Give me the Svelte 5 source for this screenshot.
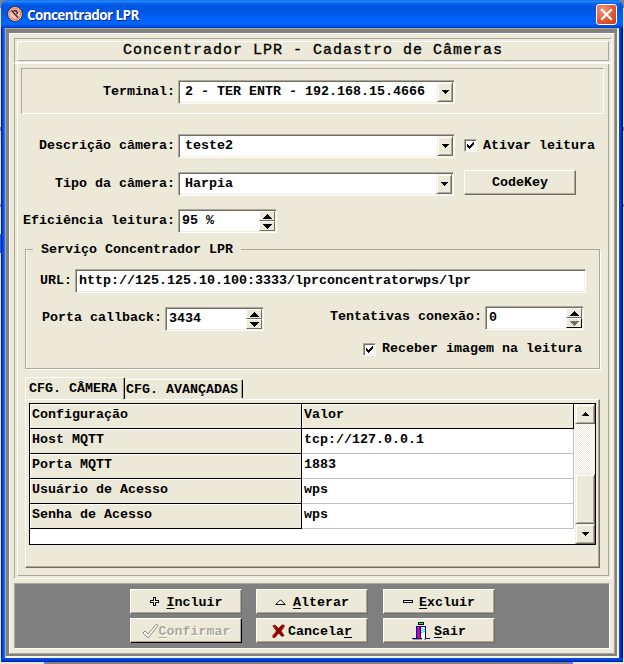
<script>
  const rows = [
    ['Host MQTT', 'tcp://127.0.0.1'],
    ['Porta MQTT', '1883'],
    ['Usuário de Acesso', 'wps'],
    ['Senha de Acesso', 'wps']
  ];
  let ativar = $state(true);
  let receber = $state(true);
</script>

{#snippet combo(value, cls)}
  <div class="field combo {cls}">
    <span>{value}</span>
    <button class="drop" aria-label="Abrir">
      <svg width="7" height="4" shape-rendering="crispEdges"><path d="M0 0h7v1h-1v1h-1v1h-1v1h-1v-1h-1v-1h-1v-1h-1z" /></svg>
    </button>
  </div>
{/snippet}

{#snippet spin(value, off)}
  <div class="field spin">
    <span>{value}</span>
    <div class="steps">
      <button aria-label="Mais"><svg width="9" height="5" shape-rendering="crispEdges"><path d="M4 0h1v1h1v1h1v1h1v1h1v1h-9v-1h1v-1h1v-1h1v-1h1z" /></svg></button>
      <button aria-label="Menos" class:off><svg width="9" height="5" shape-rendering="crispEdges"><path d="M0 0h9v1h-1v1h-1v1h-1v1h-1v1h-1v-1h-1v-1h-1v-1h-1v-1h-1z" /></svg></button>
    </div>
  </div>
{/snippet}

{#snippet check(on)}
  <span class="check">
    {#if on}<svg width="7" height="7" shape-rendering="crispEdges"><path d="M0 2h1v1h1v1h1v-1h1v-1h1v-1h1v-1h1v3h-1v1h-1v1h-1v1h-1v1h-1v-1h-1v-1h-1z" /></svg>{/if}
  </span>
{/snippet}

<div class="desktop">
  <div class="window">
    <header class="caption">
      <svg class="logo" width="16" height="16" viewBox="0 0 16 16">
        <circle cx="8" cy="8" r="7.4" fill="#fff" stroke="#34221f" />
        <circle cx="8" cy="8" r="5.8" fill="#f8c4ba" stroke="#e88070" stroke-width="1.4" />
        <path d="M4.500 4.500l6.500 7M6.500 4.800h2.600l1.400 1.700-1 1.600" fill="none" stroke="#4b2025" stroke-width="1.400" />
      </svg>
      <span class="name">Concentrador LPR</span>
      <button class="close" aria-label="Fechar">
        <svg width="21" height="21" viewBox="0 0 21 21"><path d="M6 6l9 9M15 6l-9 9" stroke="#fff" stroke-width="2.2" stroke-linecap="square" /></svg>
      </button>
    </header>

    <div class="client">
      <div class="sheet">
        <div class="head"><h1>Concentrador LPR - Cadastro de Câmeras</h1></div>

        <div class="frame">
          <main>
            <section class="terminal">
              <span class="lab">Terminal:</span>{@render combo('2 - TER ENTR - 192.168.15.4666', '')}
            </section>

            <div class="row r1">
              <span class="lab">Descrição câmera:</span>{@render combo('teste2', '')}
              <label>{@render check(ativar)}Ativar leitura<input type="checkbox" bind:checked={ativar} hidden /></label>
            </div>
            <div class="row r2">
              <span class="lab">Tipo da câmera:</span>{@render combo('Harpia', 'short')}
              <button class="btn key">CodeKey</button>
            </div>
            <div class="row r3">
              <span class="lab">Eficiência leitura:</span>{@render spin('95 %', false)}
            </div>

            <fieldset>
              <legend>Serviço Concentrador LPR</legend>
              <div class="url"><span>URL:</span><div class="field">http://125.125.10.100:3333/lprconcentratorwps/lpr</div></div>
              <div class="ports">
                <div class="port"><span>Porta callback:</span>{@render spin('3434', false)}</div>
                <div class="port tries"><span>Tentativas conexão:</span>{@render spin('0', true)}</div>
              </div>
              <label class="recv">{@render check(receber)}Receber imagem na leitura<input type="checkbox" bind:checked={receber} hidden /></label>
            </fieldset>

            <nav>
              <button class="tab on">CFG. CÂMERA</button>
              <button class="tab">CFG. AVANÇADAS</button>
            </nav>
            <div class="pane">
              <div class="grid">
                <div class="cells">
                  <div class="line top"><div class="k">Configuração</div><div class="h">Valor</div></div>
                  {#each rows as [k, v]}
                    <div class="line"><div class="k">{k}</div><div class="v">{v}</div></div>
                  {/each}
                </div>
                <div class="bar">
                  <button class="sb" aria-label="Subir"><svg width="7" height="4" shape-rendering="crispEdges"><path d="M3 0h1v1h1v1h1v1h1v1h-7v-1h1v-1h1v-1h1z" /></svg></button>
                  <div class="gap"></div>
                  <div class="sb thumb"></div>
                  <button class="sb" aria-label="Descer"><svg width="7" height="4" shape-rendering="crispEdges"><path d="M0 0h7v1h-1v1h-1v1h-1v1h-1v-1h-1v-1h-1v-1h-1z" /></svg></button>
                </div>
              </div>
            </div>
          </main>
        </div>

        <footer>
          <button class="btn">
            <svg width="9" height="9" style:margin-right="8px" shape-rendering="crispEdges"><path d="M3.5 .5h2v3h3v2h-3v3h-2v-3h-3v-2h3z" fill="#fff" stroke="#000" /></svg><span><u>I</u>ncluir</span>
          </button>
          <button class="btn">
            <svg width="11" height="6" style:margin-right="7px"><path d="M.8 5.5L5.5 .8l4.7 4.7z" fill="#fff" stroke="#000" /></svg><span><u>A</u>lterar</span>
          </button>
          <button class="btn">
            <svg width="10" height="3" style:margin-right="6px" shape-rendering="crispEdges"><path d="M.5 .5h9v2h-9z" fill="#fff" stroke="#000" /></svg><span><u>E</u>xcluir</span>
          </button>
          <button class="btn gray">
            <svg width="17" height="16"><path d="M1 10l2-2 3 3 8.500-10 1.500 1.500L6 15z" fill="#fff" stroke="#8f8c80" /></svg><span><u>C</u>onfirmar</span>
          </button>
          <button class="btn">
            <svg width="13" height="14" style:margin-right="3px"><path d="M1 2l2-1 3.500 3.500L10 1h2v2L9 7l3 4.500-2 1L6.500 9 3 13.500H1v-2L4.500 7z" fill="#8b0000" stroke="#8b0000" stroke-width=".8" /><path d="M1 1.500l3.500 5M4 8L1 11.500v2M12 1v2L9 6.500" fill="none" stroke="#f01818" /></svg><span>Cancela<u>r</u></span>
          </button>
          <button class="btn">
            <svg width="18" height="18" style:margin-right="4px" shape-rendering="crispEdges">
              <path d="M6 0h6v3H6z" /><path d="M7 1h4v1H7z" fill="#0f0" />
              <path d="M4 4h10v12h4v1h-5V5H5v12H0v-1h4z" fill="#000080" />
              <path d="M5 5h4v11H5z" fill="#c000c0" /><path d="M9 5h4v11H9z" fill="#fff" />
              <path d="M9 6h2v1H9zM11 7h2v1h-2zM9 8h2v1H9zM11 9h2v1h-2zM9 10h2v1H9z" fill="#0ee" />
              <path d="M5 16h5v1H5zM8 15h1v2H8zM8 5h1v10H8z" fill="#300050" /><path d="M1 17h9v1H1zM12 17h2v1h-2z" fill="#999" />
            </svg><span><u>S</u>air</span>
          </button>
        </footer>
      </div>
    </div>
  </div>
  <div class="under"></div>
</div>

<style>
  .desktop, .desktop * { box-sizing: border-box; }
  .desktop {
    width: 624px; height: 664px; overflow: hidden; padding: 0 1px;
    background:
      linear-gradient(#7d8296, #7d8296) 0 0 / 624px 8px no-repeat,
      linear-gradient(#2a62c8, #2a62c8) 0 234px / 1px 19px no-repeat,
      linear-gradient(#8c8a96, #8c8a96) 0 127px / 624px 4px no-repeat,
      linear-gradient(#8c8a96, #8c8a96) 0 204px / 624px 3px no-repeat,
      #e6e3da;
    font: bold 13.33px/16px "Liberation Mono", "Courier New", monospace; color: #000;
  }
  button { font: inherit; color: inherit; padding: 0; margin: 0; border: 0; border-radius: 0; background: #ece9d8; }
  svg { display: block; flex: none; }
  .window {
    width: 622px; height: 662px; border-radius: 7px 7px 0 0; padding: 0 4px 4px;
    background:
      linear-gradient(#0a50e4, #003cdc 50%, #001ea0) 0 658px / 622px 4px no-repeat,
      linear-gradient(90deg, #0019cf 1px, #0440d8 1px 2px, #0a5aec 2px 3px, #1c6cf4 3px 4px, transparent 4px) 0 28px / 4px 630px no-repeat,
      linear-gradient(90deg, #0048ee 1px, #003ce0 1px 2px, #0022b4 2px 3px, #001490 3px) 618px 28px / 4px 630px no-repeat,
      #0054e3;
  }
  .caption {
    height: 28px; margin: 0 -4px; padding: 0 6px 1px; border-radius: 7px 7px 0 0;
    display: flex; align-items: center;
    background: linear-gradient(#0d5ad8 0, #2a8fff 1px, #0868ee 3px, #0054e0 6px, #0056e6 12px, #0062fa 19px, #0066ff 24px, #0050e0 26px, #003cc4 28px);
  }
  .name {
    margin-left: 4px; flex: 1; color: #fff; text-shadow: 1px 1px #0a2a8c; white-space: nowrap;
    font: bold 13.5px/16px "Open Sans", "Noto Sans", sans-serif; letter-spacing: -.6px; padding-top: 3px;
  }
  .close {
    width: 21px; height: 21px; margin-top: 2px; border: 1px solid #fff; border-radius: 3px;
    background: radial-gradient(circle at 30% 25%, #f0947a, #e25a34 55%, #c23a14);
  }
  .close svg { margin: -1px; }
  .client {
    height: 630px; padding: 4px 2px 2px 3px; background: #808080;
    border: solid; border-width: 1px 2px 2px 1px; border-color: #aca899 #f6f5ee #f6f5ee #aca899;
  }
  .sheet {
    height: 621px; background: #ece9d8; padding: 4px 2px 0 4px;
    border: 1px solid; border-color: #fff #aca899 #aca899 #fff;
  }
  .head {
    width: 598px; height: 26px; padding: 2px;
    border: solid; border-width: 1px 1px 2px 1px; border-color: #aca899 #fff #fff #aca899;
  }
  h1 {
    margin: 0; height: 20px; border: 1px solid; border-color: #fff #aca899 #aca899 #fff;
    text-align: center; font: normal 15px/18px "Liberation Mono", "Courier New", monospace; letter-spacing: 1px;
    -webkit-text-stroke: .35px #000;
  }
  .frame {
    width: 598px; height: 515px; padding: 0 2px 2px;
    border: solid; border-width: 0 1px 1px; border-color: #fff #fff #fff #aca899;
  }
  main {
    height: 512px; border: solid; border-width: 0 1px 1px; border-color: #aca899 #aca899 #aca899 #fff;
    padding: 4px 4px 0 3px;
  }
  .terminal {
    height: 46px; border: 1px solid; border-color: #aca899 #fff #fff #aca899;
    display: flex; padding: 11px 0 0; width: 583px;
  }
  .lab { width: 157px; text-align: right; margin-right: 3px; line-height: 23px; white-space: nowrap; }
  .terminal .lab { width: 153px; }
  .field {
    height: 24px; background: #fff; border: 1px solid; border-color: #aca899 #fff #fff #aca899;
    box-shadow: inset 1px 1px #716f64, inset -1px -1px #f1efe2;
    padding: 0 1px 0 3px; line-height: 22px; white-space: pre; flex: none;
  }
  .combo, .spin { display: flex; justify-content: space-between; }
  .combo { width: 277px; padding: 1px 1px 0 6px; line-height: 20px; }
  .short { width: 276px; }
  .drop, .sb {
    width: 16px; height: 20px; display: flex; align-items: center; justify-content: center;
    border: 1px solid; border-color: #f1efe2 #716f64 #716f64 #f1efe2;
    box-shadow: inset 1px 1px #fff, inset -1px -1px #aca899;
  }
  .spin { width: 99px; padding: 1px 1px 0 3px; line-height: 20px; }
  .steps { width: 16px; height: 20px; display: flex; flex-direction: column; }
  .steps button {
    width: 16px; height: 10px; flex: none; display: flex; align-items: center; justify-content: center; padding-left: 1px;
    border: 1px solid; border-color: #fff #716f64 #716f64 #fff;
  }
  .steps .off { fill: #716f64; border-color: #fff #000 #000 #fff; }
  .row { display: flex; height: 24px; margin-left: -3px; }
  .r1 { margin-top: 20px; }
  .r2 { margin-top: 14px; }
  .r3 { margin-top: 13px; }
  label { display: flex; align-items: center; white-space: nowrap; }
  .row label { margin-left: 9px; height: 23px; }
  .check {
    width: 13px; height: 13px; margin-right: 6px; background: #fff; display: grid; place-items: center;
    border: 1px solid; border-color: #aca899 #fff #fff #aca899;
    box-shadow: inset 1px 1px #716f64, inset -1px -1px #f1efe2;
  }
  .btn {
    width: 112px; height: 25px; display: flex; align-items: center; justify-content: center;
    border: 1px solid; border-color: #fff #716f64 #716f64 #fff; box-shadow: inset -1px -1px #aca899;
  }
  .key { margin: -2px 0 0 10px; }
  fieldset {
    margin: 8px 0 0 4px; padding: 0; width: 575px; height: 128px;
    border: 1px solid #aca899; box-shadow: 1px 1px #fff, inset 1px 0 #fff; min-width: 0;
  }
  legend { margin-left: 7px; padding: 1px 8px 0; height: 16px; }
  .url { display: flex; margin: 12px 0 0 14px; }
  .url span { width: 35px; line-height: 24px; }
  .url .field { width: 511px; }
  .ports { display: flex; margin: 14px 0 0 16px; height: 24px; }
  .port { display: flex; }
  .port span { width: 123px; line-height: 22px; white-space: nowrap; }
  .port .spin span { width: auto; line-height: 20px; }
  .tries { margin: -1px 0 0 67px; }
  .tries > span { width: 154px; margin-left: -1px; margin-right: 1px; }
  .recv { margin: 10px 0 0 337px; height: 16px; }
  nav { display: flex; align-items: flex-end; margin: 8px 0 0 4px; height: 22px; }
  .tab {
    height: 19px; width: 118px; text-align: left; padding: 1px 0 0 1px; line-height: 17px; white-space: nowrap; margin-bottom: 1px;
    border-top: 1px solid #fff; border-right: 1px solid #000; box-shadow: inset -1px 0 #aca899; border-radius: 2px 2px 0 0;
  }
  .tab.on { width: 100px; height: 22px; padding: 0 0 0 3px; margin: 0; border-left: 1px solid #fff; line-height: 19px; }
  .pane {
    margin-left: 4px; width: 575px; height: 169px; padding: 3px;
    border: 1px solid; border-color: #fff #716f64 #716f64 #fff; box-shadow: inset -1px -1px #aca899;
  }
  .grid { width: 567px; height: 142px; border: 1px solid #000; background: #fff; display: flex; }
  .cells { width: 544px; margin-right: 1px; }
  .line { display: flex; height: 25px; line-height: 22px; }
  .k, .h {
    background: #ece9d8; border: solid #000; border-width: 0 1px 1px 0; box-shadow: inset 1px 1px #fff;
  }
  .k { width: 272px; padding-left: 2px; }
  .h { width: 272px; padding-left: 2px; }
  .v { width: 272px; padding-left: 2px; border: solid #c0c0c0; border-width: 0 1px 1px 0; }
  .bar { width: 20px; display: flex; flex-direction: column; background: #ece9d8; }
  .sb { width: 20px; flex: none; }
  .gap { flex: 1; background: conic-gradient(#fff 25%, #ece9d8 0 50%, #fff 0 75%, #ece9d8 0) 0 0 / 2px 2px; }
  .thumb { height: 50px; }
  footer {
    margin-top: 4px; width: 596px; height: 66px; background: #808080; padding: 5px 0 0 115px;
    border: 1px solid; border-color: #aca899 #fff #fff #aca899;
    display: grid; grid-template-columns: 112px 112px 112px; grid-auto-rows: 25px; column-gap: 14px; row-gap: 4px; align-content: start;
  }
  footer .btn > span { padding-top: 2px; }
  footer .btn:nth-child(3n) { margin-left: 1px; }
  u { text-underline-offset: 2px; text-decoration-thickness: 1px; }
  .gray { color: #aca899; text-shadow: 1px 1px #fff; border-color: #fff #000 #000 #fff; }
  .under {
    height: 2px; margin: 0 50px 0 43px;
    background: linear-gradient(90deg, #6c78dc 4px, #808080 4px 524px, #6c78dc 524px);
  }
</style>
